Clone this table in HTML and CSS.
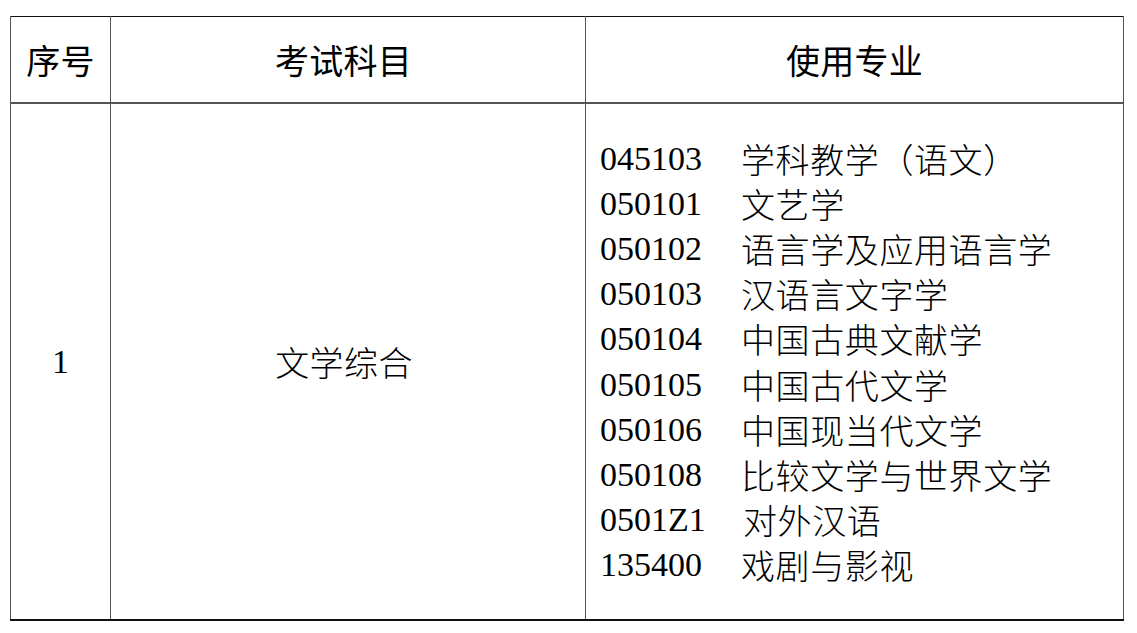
FILE: index.html
```html
<!DOCTYPE html>
<html lang="zh-CN">
<head>
<meta charset="utf-8">
<link rel="stylesheet" href="styles.css">
</head>
<body>
<div class="page">
  <table class="subjects">
    <colgroup>
      <col class="c-no">
      <col class="c-subject">
      <col class="c-major">
    </colgroup>
    <thead>
      <tr class="head-row">
        <th>序号</th>
        <th class="subject-head">考试科目</th>
        <th>使用专业</th>
      </tr>
    </thead>
    <tbody>
      <tr class="body-row">
        <td class="num">1</td>
        <td class="subject">文学综合</td>
        <td class="majors">
          <ul class="major-list">
            <li><span class="code">045103</span><span class="name">学科教学（语文）</span></li>
            <li><span class="code">050101</span><span class="name">文艺学</span></li>
            <li><span class="code">050102</span><span class="name">语言学及应用语言学</span></li>
            <li><span class="code">050103</span><span class="name">汉语言文字学</span></li>
            <li><span class="code">050104</span><span class="name">中国古典文献学</span></li>
            <li><span class="code">050105</span><span class="name">中国古代文学</span></li>
            <li><span class="code">050106</span><span class="name">中国现当代文学</span></li>
            <li><span class="code">050108</span><span class="name">比较文学与世界文学</span></li>
            <li><span class="code">0501Z1</span><span class="name shift">对外汉语</span></li>
            <li><span class="code">135400</span><span class="name">戏剧与影视</span></li>
          </ul>
        </td>
      </tr>
    </tbody>
  </table>
</div>
</body>
</html>
```

FILE: styles.css
```css
html, body {
  margin: 0;
  padding: 0;
  background: #fff;
}

.page {
  padding: 16px 0 0 10px;
}

.subjects {
  border-collapse: collapse;
  table-layout: fixed;
  width: 1113px;
  font-family: "Liberation Serif", "Noto Sans CJK SC", serif;
  font-size: 34px;
  color: #000;
  border-top: 1px solid #111;
  border-right: 1px solid #111;
  border-bottom: 2px solid #111;
  border-left: 1px solid #555;
}

.c-no { width: 100px; }
.c-subject { width: 475px; }
.c-major { width: 538px; }

.subjects th,
.subjects td {
  border-left: 1px solid #555;
  border-right: 1px solid #555;
  padding: 0;
  text-align: center;
  vertical-align: middle;
}

.head-row th {
  height: 85px;
  border-bottom: 2px solid #555;
  font-family: "Noto Sans CJK SC", sans-serif;
  font-weight: 400;
  font-size: 34px;
  line-height: 1;
  letter-spacing: 0.3px;
}

.head-row th.subject-head {
  padding-right: 9px;
}

.body-row td {
  height: 515px;
  font-weight: 300;
}

.subject {
  font-family: "Noto Sans CJK SC", sans-serif;
  font-weight: 300;
  letter-spacing: 0.4px;
  padding-right: 8px !important;
}

.majors {
  text-align: left !important;
  padding-left: 14px !important;
}

.major-list {
  list-style: none;
  margin: 0;
  padding: 0;
}

.major-list li {
  display: flex;
  height: 45.2px;
  line-height: 45.2px;
  white-space: nowrap;
}

.code {
  width: 141px;
  flex: none;
}

.name {
  font-family: "Noto Sans CJK SC", sans-serif;
  font-weight: 300;
  letter-spacing: 0.6px;
}

.name.shift {
  padding-left: 2px;
}
```
